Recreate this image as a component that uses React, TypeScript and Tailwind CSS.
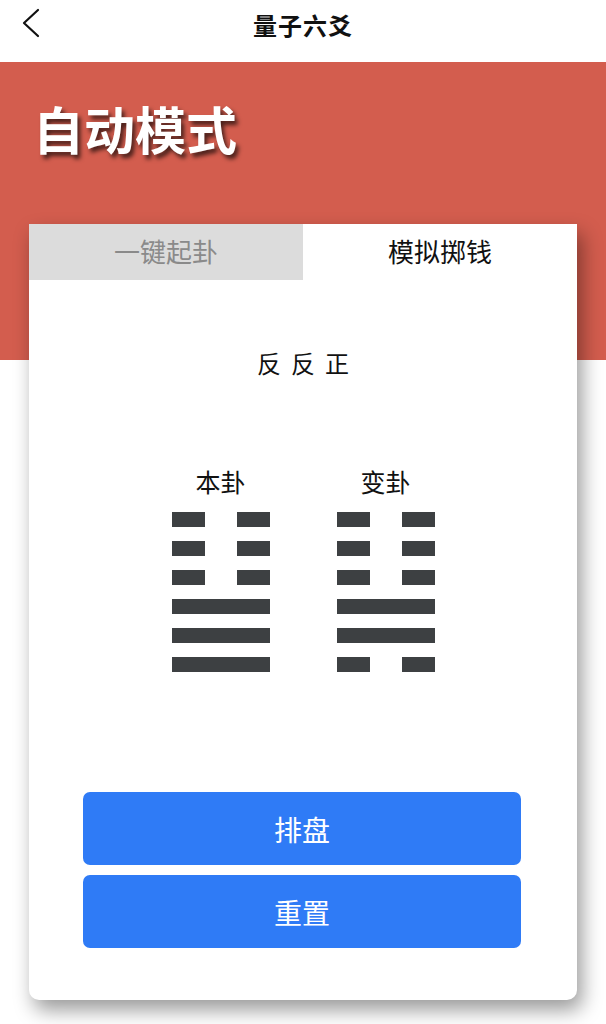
import React from "react";

const FONT = { fontFamily: '"Noto Sans CJK SC", "Noto Sans", sans-serif' };

function Line({ yin }: { yin: boolean }) {
  if (!yin) return <div className="h-[15px] w-[98px] bg-[#3d4042]" />;
  return (
    <div className="flex h-[15px] w-[98px] justify-between">
      <div className="h-full w-[33px] bg-[#3d4042]" />
      <div className="h-full w-[33px] bg-[#3d4042]" />
    </div>
  );
}

function Gua({ label, lines }: { label: string; lines: boolean[] }) {
  return (
    <div className="flex flex-col items-center">
      <div className="text-[25px] leading-[24px] text-[#111]">{label}</div>
      <div className="mt-[19px] flex flex-col gap-[14px]">
        {lines.map((y, i) => (
          <Line key={i} yin={y} />
        ))}
      </div>
    </div>
  );
}

export default function App() {
  return (
    <div className="relative min-h-screen w-full bg-white" style={FONT}>
      <div className="relative flex h-[62px] items-center justify-center bg-white pb-[12px]">
        <svg
          className="absolute left-[20px] top-[8px]"
          width="22"
          height="32"
          viewBox="0 0 22 32"
          fill="none"
        >
          <polyline
            points="18,2 4,15 18,28"
            stroke="#111"
            strokeWidth="2.2"
            strokeLinecap="round"
            strokeLinejoin="round"
          />
        </svg>
        <div className="text-[24px] font-bold tracking-[1px] text-[#111]">量子六爻</div>
      </div>
      <div className="h-[298px] bg-[#d35d4e] pl-[33px] pt-[36px]">
        <div className="text-[51px] font-bold leading-[60px] text-white [text-shadow:3px_4px_4px_rgba(0,0,0,0.65)]">
          自动模式
        </div>
      </div>
      <div className="relative mx-[29px] mt-[-136px] rounded-b-[10px] bg-white pb-[52px] shadow-[5px_10px_20px_rgba(0,0,0,0.4)]">
        <div className="flex h-[56px]">
          <div className="flex flex-1 items-center justify-center bg-[#dcdcdc] pb-[3px] text-[26px] text-[#8a8a8a]">
            一键起卦
          </div>
          <div className="flex flex-1 items-center justify-center bg-white pb-[3px] text-[26px] text-[#111]">
            模拟掷钱
          </div>
        </div>
        <div className="mt-[71px] pl-[10px] text-center text-[24px] leading-[24px] tracking-[10px] text-[#111]">
          反反正
        </div>
        <div className="mt-[94px] flex justify-center gap-[67px]">
          <Gua label="本卦" lines={[true, true, true, false, false, false]} />
          <Gua label="变卦" lines={[true, true, true, false, false, true]} />
        </div>
        <div className="mt-[120px] flex flex-col gap-[10px] pl-[54px] pr-[56px]">
          <button className="flex h-[73px] items-center justify-center rounded-[7px] bg-[#2f7bf6] text-[28px] text-white">
            排盘
          </button>
          <button className="flex h-[73px] items-center justify-center rounded-[7px] bg-[#2f7bf6] text-[28px] text-white">
            重置
          </button>
        </div>
      </div>
    </div>
  );
}
